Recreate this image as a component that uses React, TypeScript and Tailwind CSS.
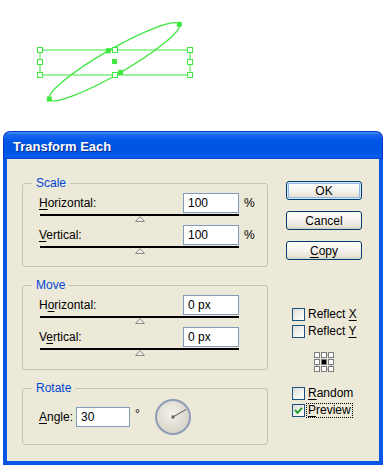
import React from "react";

function U({ children }: { children: React.ReactNode }) {
  return <span className="underline underline-offset-[2px]">{children}</span>;
}

function Field({ value }: { value: string }) {
  return (
    <div className="h-[20px] w-[56px] border border-[#7f9db9] bg-white pl-[4px] flex items-center text-black">
      {value}
    </div>
  );
}

function Row({ label, value, unit }: { label: React.ReactNode; value: string; unit?: string }) {
  return (
    <div className="flex items-center h-[20px]">
      <span className="w-[144px]">{label}</span>
      <Field value={value} />
      {unit && <span className="ml-[5px]">{unit}</span>}
    </div>
  );
}

function Slider() {
  return (
    <div className="h-[12px] pt-[1px] ml-[1px] w-[199px] flex flex-col">
      <div className="h-[2px] bg-black shrink-0" />
      <svg width="10" height="6" viewBox="0 0 10 6" className="self-center block">
        <polygon points="5,0.5 9.5,5.5 0.5,5.5" fill="#ecebe4" stroke="#8a8a80" strokeWidth="1" />
      </svg>
    </div>
  );
}

function Group({ title, children, className = "" }: { title: string; children: React.ReactNode; className?: string }) {
  return (
    <fieldset className={`border border-[#c5c2b2] rounded-[3px] p-0 m-0 min-w-0 ${className}`}>
      <legend className="ml-[9px] px-[4px] text-[#0046d5] leading-[14px]">{title}</legend>
      {children}
    </fieldset>
  );
}

function Button({ children, def = false }: { children: React.ReactNode; def?: boolean }) {
  return (
    <div
      className={`h-[19px] w-[76px] rounded-[3px] border border-[#003c74] bg-[linear-gradient(to_bottom,#ffffff_0%,#f4f3ee_50%,#e6e3d6_85%,#d6d0c5_100%)] flex items-center justify-center leading-[14px] ${
        def ? "shadow-[inset_0_0_0_1px_#cee7ff,inset_0_0_0_2px_#98b8ea]" : ""
      }`}
    >
      {children}
    </div>
  );
}

function Check({ checked = false }: { checked?: boolean }) {
  return (
    <div className="w-[13px] h-[13px] border border-[#1c5180] bg-[linear-gradient(135deg,#dcdcd7_0%,#f4f4f0_60%,#ffffff_100%)] flex items-center justify-center shrink-0">
      {checked && (
        <svg width="11" height="11" viewBox="0 0 11 11">
          <polyline points="2,5 4.5,7.8 9,2.8" fill="none" stroke="#21a121" strokeWidth="2" />
        </svg>
      )}
    </div>
  );
}

function CheckRow({ children, checked = false, focus = false }: { children: React.ReactNode; checked?: boolean; focus?: boolean }) {
  return (
    <div className="h-[17px] ml-[6px] flex items-center">
      <Check checked={checked} />
      <span
        className={`ml-[1px] leading-[13px] px-[1px] border ${
          focus ? "border-dotted border-black" : "border-transparent"
        }`}
      >
        {children}
      </span>
    </div>
  );
}

function Locator() {
  const pos = [0.5, 7.5, 14.5];
  return (
    <svg width="20" height="20" viewBox="0 0 20 20" className="block self-center">
      <g stroke="#8c8c8c" strokeWidth="1" strokeDasharray="1 1">
        <line x1="3" y1="3" x2="17" y2="3" />
        <line x1="3" y1="17" x2="17" y2="17" />
        <line x1="3" y1="3" x2="3" y2="17" />
        <line x1="17" y1="3" x2="17" y2="17" />
      </g>
      {pos.map((y) =>
        pos.map((x) => (
          <rect
            key={`${x}-${y}`}
            x={x}
            y={y}
            width="5"
            height="5"
            fill={x === 7.5 && y === 7.5 ? "#000" : "#fff"}
            stroke="#7c7c7c"
            strokeWidth="1"
          />
        ))
      )}
    </svg>
  );
}

function Dial() {
  return (
    <svg width="38" height="38" viewBox="0 0 38 38" className="block">
      <defs>
        <radialGradient id="dg" cx="45%" cy="40%" r="65%">
          <stop offset="0" stopColor="#f3f2ec" />
          <stop offset="1" stopColor="#d3d0c3" />
        </radialGradient>
      </defs>
      <circle cx="19" cy="19" r="17" fill="url(#dg)" stroke="#8e9cb8" strokeWidth="2" />
      <line x1="19" y1="19" x2="32" y2="11.5" stroke="#555" strokeWidth="1" />
      <rect x="17.5" y="17.5" width="3" height="3" fill="#666" />
    </svg>
  );
}

function Artwork() {
  const hollow: [number, number][] = [
    [40, 50], [115, 50], [190, 50], [40, 62], [190, 62], [40, 75], [115, 75], [190, 75],
  ];
  const anchors: [number, number][] = [
    [108.3, 50.7], [179.3, 24.3], [120.7, 72.3], [49.3, 99],
  ];
  return (
    <svg width="383" height="131" viewBox="0 0 383 131" className="block shrink-0">
      <rect x="40" y="50" width="150" height="25" fill="none" stroke="#3ee83e" strokeWidth="1" />
      <ellipse cx="114.3" cy="61.7" rx="75" ry="12.5" transform="rotate(-30 114.3 61.7)" fill="none" stroke="#3ee83e" strokeWidth="1.3" />
      {anchors.map(([x, y], i) => (
        <rect key={i} x={x - 2.5} y={y - 2.5} width="5" height="5" fill="#3ee83e" />
      ))}
      {hollow.map(([x, y], i) => (
        <rect key={i} x={x - 2.5} y={y - 2.5} width="5" height="5" fill="#fff" stroke="#3ee83e" strokeWidth="1" />
      ))}
      <rect x="112" y="59" width="5" height="5" fill="#3ee83e" />
    </svg>
  );
}

export default function App() {
  return (
    <div className="w-[383px] h-[465px] bg-white flex flex-col overflow-hidden font-['Liberation_Sans',Arial,sans-serif] text-[12px] leading-[14px] text-black">
      <Artwork />
      <div className="ml-[3px] w-[380px] flex-1 flex flex-col">
        <div className="h-[28px] shrink-0 rounded-t-[7px] bg-[linear-gradient(to_bottom,#4796fa_0%,#1a66f0_10%,#0055e5_35%,#0054e3_75%,#0a5ef0_90%,#0047d4_100%)] flex items-center pl-[9px] pt-[2px] border-x border-t border-[#0835c8]">
          <span className="text-white font-bold text-[13px] [text-shadow:1px_1px_0_#0b2b8f]">Transform Each</span>
        </div>
        <div className="flex-1 bg-[#ece9d8] border-x-4 border-b-4 border-[#0a56e6] flex pl-[15px]">
          <div className="w-[246px] pt-[17px] flex flex-col gap-[11px]">
            <Group title="Scale">
              <div className="pl-[16px] pt-[3px] pb-[9px]">
                <Row label={<><U>H</U>orizontal:</>} value="100" unit="%" />
                <Slider />
                <Row label={<><U>V</U>ertical:</>} value="100" unit="%" />
                <Slider />
              </div>
            </Group>
            <Group title="Move">
              <div className="pl-[16px] pt-[3px] pb-[10px]">
                <Row label={<>H<U>o</U>rizontal:</>} value="0 px" />
                <Slider />
                <Row label={<>V<U>e</U>rtical:</>} value="0 px" />
                <Slider />
              </div>
            </Group>
            <Group title="Rotate">
              <div className="pl-[16px] pt-[4px] pb-[9px] flex items-center h-[49px]">
                <span className="w-[37px]"><U>A</U>ngle:</span>
                <div className="h-[20px] w-[54px] border border-[#7f9db9] bg-white pl-[4px] flex items-center">30</div>
                <span className="ml-[5px] self-start mt-[8px]">°</span>
                <div className="ml-[14px]">
                  <Dial />
                </div>
              </div>
            </Group>
          </div>
          <div className="ml-[18px] pt-[22px] w-[76px] flex flex-col">
            <div className="flex flex-col gap-[11px]">
              <Button def>OK</Button>
              <Button>Cancel</Button>
              <Button><U>C</U>opy</Button>
            </div>
            <div className="mt-[46px] flex flex-col">
              <CheckRow>Reflect <U>X</U></CheckRow>
              <CheckRow>Reflect <U>Y</U></CheckRow>
            </div>
            <div className="mt-[12px] flex flex-col">
              <Locator />
            </div>
            <div className="mt-[13px] flex flex-col">
              <CheckRow><U>R</U>andom</CheckRow>
              <CheckRow checked focus><U>P</U>review</CheckRow>
            </div>
          </div>
        </div>
      </div>
    </div>
  );
}
